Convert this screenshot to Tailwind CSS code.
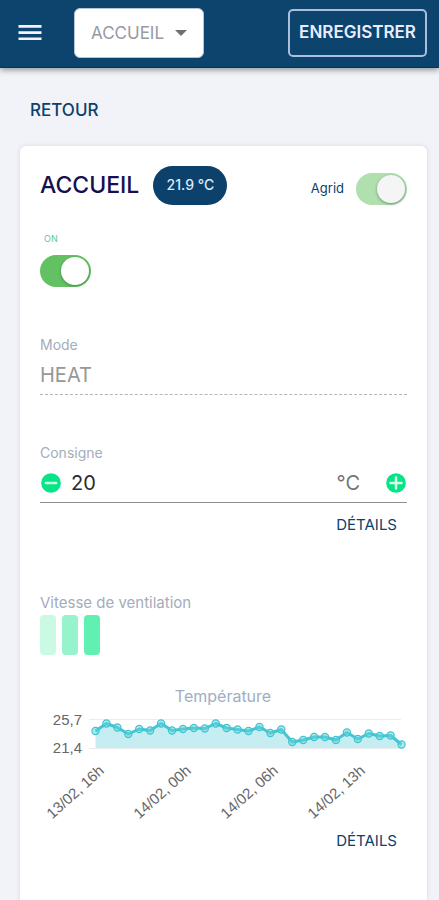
<!DOCTYPE html>
<html lang="fr">
<head>
<meta charset="utf-8">
<meta name="viewport" content="width=device-width, initial-scale=1">
<title>Accueil</title>
<script src="https://cdn.jsdelivr.net/npm/@tailwindcss/browser@4"></script>
</head>
<body class="flex min-h-screen flex-col bg-[#f1f3f8] font-['Inter','Liberation_Sans',sans-serif] text-[#0b416b]">
<header class="flex h-17 shrink-0 items-center border-b border-[#0a3460] bg-[#0c446e] pr-3 pb-px pl-4 shadow-[0_2px_6px_rgba(0,0,0,0.4)]">
  <button type="button" aria-label="Menu" class="flex size-7 items-center justify-center">
    <svg viewBox="0 0 24 18" class="h-[18px] w-6" fill="#f4f2ff" aria-hidden="true"><path d="M.5 1h23v2.700H.5zM.5 7.200h23v2.700H.5zM.5 13.400h23v2.700H.5z"/></svg>
  </button>
  <div class="relative ml-7.5">
    <label for="zone" class="sr-only">Zone</label>
    <select id="zone" class="block h-[50px] w-[130px] appearance-none rounded-md border border-[#b5c3d3] bg-white pl-4 text-[17px] leading-7 text-[#9799a4]"><option>ACCUEIL</option></select>
    <svg viewBox="0 0 12 6" class="pointer-events-none absolute top-[22px] right-[17px] h-[6px] w-3" fill="#707070" aria-hidden="true"><path d="M0 0h12L6 6z"/></svg>
  </div>
  <button type="button" class="ml-auto h-12 w-[139px] rounded-[5px] border-2 border-[#a9bfdc] text-[17px] font-semibold text-[#e9eeff]">ENREGISTRER</button>
</header>
<main class="flex flex-1 flex-col px-5 pr-3">
  <a href="#" class="mt-7.5 ml-2.5 self-start text-[17px] leading-6 font-medium">RETOUR</a>
  <section class="mt-6 flex-1 rounded-t-md bg-white px-5 pt-[19px] shadow-[0_0_4px_rgba(60,70,100,0.15)]">
    <div class="flex items-center">
      <h1 class="text-[23px] leading-8 font-medium text-[#171050]">ACCUEIL</h1>
      <span class="ml-3.5 flex h-[39px] w-[74px] items-center justify-center rounded-full bg-[#0b416b] text-sm font-medium text-[#dfe8f8]">21.9 °C</span>
      <label for="agrid" class="mt-2 ml-auto text-[13px]">Agrid</label>
      <input id="agrid" type="checkbox" role="switch" checked disabled class="relative mt-2 ml-3 h-8 w-[51px] appearance-none rounded-full bg-[#afe0ae] before:absolute before:top-[2px] before:right-[2px] before:size-7 before:rounded-full before:bg-[#f5f5f5] before:shadow-[0_1px_3px_rgba(0,0,0,0.35)]">
    </div>
    <div class="mt-7 flex flex-col items-start">
      <label for="power" class="ml-1 text-[9px] leading-3 text-[#5cc997]">ON</label>
      <input id="power" type="checkbox" role="switch" checked class="relative mt-2.5 h-8 w-[51px] appearance-none rounded-full bg-[#62c263] before:absolute before:top-[2px] before:right-[2px] before:size-7 before:rounded-full before:bg-white before:shadow-[0_1px_3px_rgba(0,0,0,0.3)]">
    </div>
    <div class="mt-12">
      <label for="mode" class="block text-sm text-[#a4acba]">Mode</label>
      <input id="mode" type="text" value="HEAT" disabled class="block h-10 w-full border-b border-dashed border-[#b5b5b5] text-xl text-[#979797]">
    </div>
    <div class="mt-12">
      <label for="target" class="block text-sm text-[#a4acba]">Consigne</label>
      <div class="flex h-10 items-center border-b border-[#8e8e8e]">
        <button type="button" aria-label="Diminuer" class="ml-px"><svg viewBox="0 0 20 20" class="block size-5" aria-hidden="true"><circle cx="10" cy="10" r="9.800" fill="#05e585"/><path d="M4.800 10h10.400" stroke="#c8ffe6" stroke-width="2.500" stroke-linecap="round"/></svg></button>
        <input id="target" type="text" inputmode="numeric" value="20" class="ml-2.5 w-0 flex-1 text-xl text-[#2b2b2b]">
        <span class="mr-6.5 text-xl text-[#757575]">°C</span>
        <button type="button" aria-label="Augmenter" class="mr-px"><svg viewBox="0 0 20 20" class="block size-5" aria-hidden="true"><circle cx="10" cy="10" r="9.800" fill="#05e585"/><path d="M4.500 10h11M10 4.500v11" stroke="#d8ffed" stroke-width="2.500" stroke-linecap="round"/></svg></button>
      </div>
      <a href="#" class="mt-2.5 mr-2.5 block text-right text-[15px] leading-6">DÉTAILS</a>
    </div>
    <div class="mt-14">
      <h2 class="text-[15px] leading-5 text-[#a4acba]">Vitesse de ventilation</h2>
      <div class="mt-0.5 flex gap-1.5">
        <span class="h-10 w-4 rounded-[4px] bg-[#cafae3]"></span>
        <span class="h-10 w-4 rounded-[4px] bg-[#96f3cb]"></span>
        <span class="h-10 w-4 rounded-[4px] bg-[#62f0b2]"></span>
      </div>
    </div>
    <div class="mt-7">
      <svg viewBox="0 0 367 142" class="block w-full font-['Liberation_Sans',sans-serif]" role="img" aria-label="Température">
        <text x="183" y="19" text-anchor="middle" font-size="16" fill="#9faec3" class="font-['Inter',sans-serif]">Température</text>
        <path d="M49 36.500H361M49 65.500H361" stroke="#ececec"/>
        <g font-size="15" fill="#666" text-anchor="end">
          <text x="42" y="42">25,7</text>
          <text x="42" y="70">21,4</text>
          <text transform="translate(65 89) rotate(-42)">13/02, 16h</text>
          <text transform="translate(152 89) rotate(-42)">14/02, 00h</text>
          <text transform="translate(239 89) rotate(-42)">14/02, 06h</text>
          <text transform="translate(326 89) rotate(-42)">14/02, 13h</text>
        </g>
        <polygon id="area" fill="#c6eef2"/>
        <polyline id="line" fill="none" stroke="#45c5d1" stroke-width="3" stroke-linejoin="round"/>
        <g id="dots" fill="#62d3dc" fill-opacity="0.5" stroke="#3fc4d0" stroke-width="1.200"></g>
      </svg>
      <a href="#" class="mt-1 mr-2.5 block text-right text-[15px] leading-6">DÉTAILS</a>
    </div>
  </section>
</main>
<script>
  const heights = [48, 40.5, 44.5, 51, 46, 47.5, 40.5, 47.5, 46, 45, 45.5, 40.5, 45, 46.5, 48, 44, 50, 46.5, 59, 57, 54, 54, 57, 49.5, 56, 50.5, 53, 52.5, 61.5];
  const points = heights.map((y, i) => [55.5 + i * 10.93, y]);
  const path = points.map(p => p.join(',')).join(' ');
  document.getElementById('line').setAttribute('points', path);
  document.getElementById('area').setAttribute('points', `55.5,65 ${path} 361.5,65`);
  for (const [x, y] of points) {
    const dot = document.createElementNS('http://www.w3.org/2000/svg', 'circle');
    dot.setAttribute('cx', x);
    dot.setAttribute('cy', y);
    dot.setAttribute('r', 3.6);
    document.getElementById('dots').append(dot);
  }
</script>
</body>
</html>
